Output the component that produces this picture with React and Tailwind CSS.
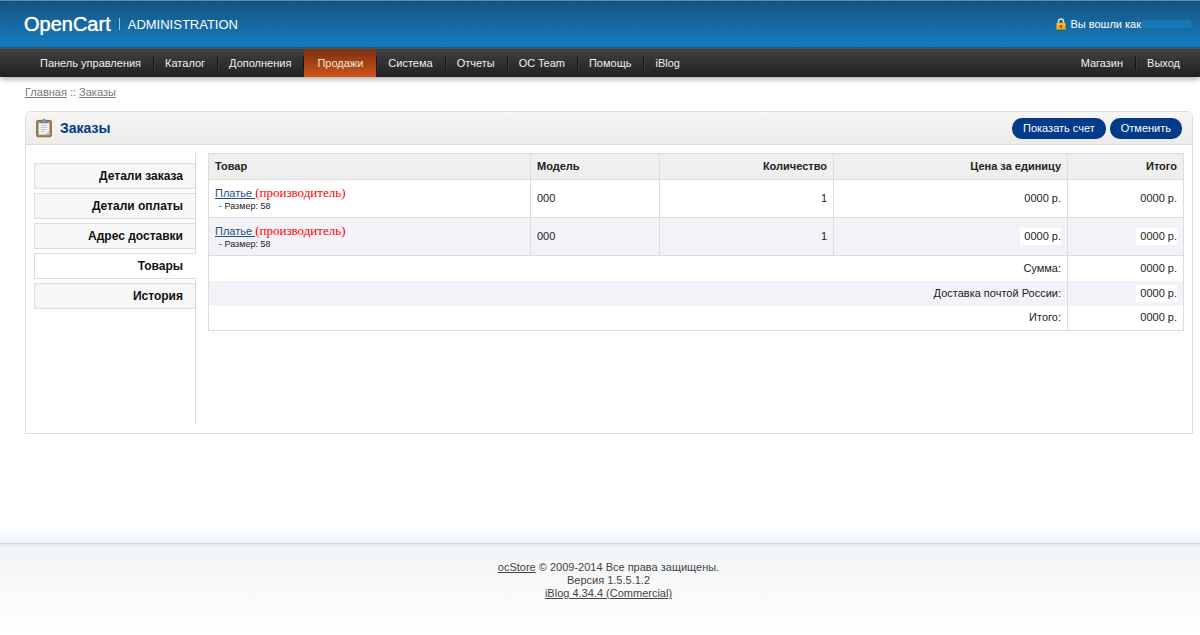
import React, { useState } from 'react';

const menuLeft = [
  'Панель управления',
  'Каталог',
  'Дополнения',
  'Продажи',
  'Система',
  'Отчеты',
  'OC Team',
  'Помощь',
  'iBlog',
];
const menuRight = ['Магазин', 'Выход'];

const tabs = ['Детали заказа', 'Детали оплаты', 'Адрес доставки', 'Товары', 'История'];

const products = [
  { id: 1, name: 'Платье', maker: '(производитель)', option: 'Размер: 58', model: '000', quantity: 1, price: '0000 р.', total: '0000 р.', masked: false },
  { id: 2, name: 'Платье', maker: '(производитель)', option: 'Размер: 58', model: '000', quantity: 1, price: '0000 р.', total: '0000 р.', masked: true },
];

const totals = [
  { id: 1, title: 'Сумма:', text: '0000 р.', masked: false },
  { id: 2, title: 'Доставка почтой России:', text: '0000 р.', masked: true },
  { id: 3, title: 'Итого:', text: '0000 р.', masked: false },
];

const LockIcon = () => (
  <svg className="h-3 w-2.5" viewBox="0 0 10 12" aria-hidden="true">
    <path d="M2.4 6V3.6a2.6 2.6 0 0 1 5.2 0V6" fill="none" stroke="#d9dde0" strokeWidth="1.5" />
    <rect x="0.4" y="5" width="9.2" height="6.6" rx="0.6" fill="#f2ab1e" stroke="#c48318" strokeWidth="0.7" />
    <path d="M1 6h8" stroke="#ffdf80" strokeWidth="0.9" />
    <path d="M5 6.9a1 1 0 0 1 .5 1.8v1.5h-1V8.7a1 1 0 0 1 .5-1.8z" fill="#4a3208" />
  </svg>
);

const OrderIcon = () => (
  <svg className="h-5 w-5" viewBox="0 0 20 20" aria-hidden="true">
    <rect x="2.6" y="2.4" width="14.8" height="16.4" rx="1.4" fill="#a87b3c" stroke="#7c5a2b" strokeWidth="0.8" />
    <path d="M4.6 3.8h10.8v13H4.6z" fill="#f4f5f9" stroke="#b4b0a8" strokeWidth="0.6" />
    <path d="M15.4 12.6l-4.2 4.2h4.2z" fill="#bcc2cf" />
    <path d="M6.6 7.5h6.8M6.6 9.5h6.8M6.6 11.5h6M6.6 13.5h4" stroke="#b3bacb" strokeWidth="0.8" />
    <path d="M5.6 5V3.2H8C8.3 1.7 9 1.2 10 1.2s1.7.5 2 2h2.4V5z" fill="#8f949b" stroke="#63676c" strokeWidth="0.6" />
  </svg>
);

const MenuItem = ({ label, active, divider }) => (
  <li className="flex items-center">
    {divider && <span className="h-3.5 w-px bg-[#161616] shadow-[1px_0_0_#3d3d3d]" />}
    <a
      href="#"
      className={
        active
          ? 'flex h-7 items-center bg-gradient-to-b from-[#7c300f] to-[#cf5519] px-[13px] text-[#f6e6dc]'
          : 'flex h-7 items-center pl-[11px] pr-3 text-[#f0f0f0]'
      }
    >
      {label}
    </a>
  </li>
);

const Header = () => (
  <header className="relative z-10">
    <div className="flex h-12 items-center justify-between border-b border-t border-b-[#2a5f86] border-t-[#5b8cb0] bg-[repeating-linear-gradient(135deg,#ffffff05_0px,#ffffff05_1px,transparent_1px,transparent_3px),linear-gradient(to_bottom,#15527f,#147cc0)] pl-6 pr-2 text-white">
      <div className="flex items-center gap-2">
        <span className="text-xl leading-6 [text-shadow:0_0_1px_#fff]">OpenCart</span>
        <span className="h-3 w-px bg-[#9cc3e0]" />
        <span className="text-[13px]">ADMINISTRATION</span>
      </div>
      <div className="flex items-center">
        <LockIcon />
        <span className="pl-1">Вы вошли как</span>
        <span className="h-2 w-[51px] rounded-sm bg-[#1a77b5]" />
      </div>
    </div>
    <nav className="flex h-[29px] items-center justify-between border-t border-[#4a5560] bg-gradient-to-b from-[#414141] to-[#212121] pl-[29px] pr-2 shadow-[0_2px_6px_rgba(0,0,0,0.35)]">
      <ul className="flex">
        {menuLeft.map((label, i) => (
          <MenuItem key={label} label={label} active={label === 'Продажи'} divider={i > 0} />
        ))}
      </ul>
      <ul className="flex">
        {menuRight.map((label, i) => (
          <MenuItem key={label} label={label} divider={i > 0} />
        ))}
      </ul>
    </nav>
  </header>
);

const Amount = ({ children, masked }) => (
  <span className={masked ? 'inline-block bg-white py-0.5 pl-1' : ''}>{children}</span>
);

const ProductTable = () => (
  <table className="w-full table-fixed border-collapse border border-[#ddd] text-[#222]">
    <colgroup>
      <col />
      <col className="w-[129px]" />
      <col className="w-[174px]" />
      <col className="w-[234px]" />
      <col className="w-[116px]" />
    </colgroup>
    <thead>
      <tr className="h-[26px] bg-[#efefef]">
        <th className="border border-[#ddd] px-1.5 text-left">Товар</th>
        <th className="border border-[#ddd] px-1.5 text-left">Модель</th>
        <th className="border border-[#ddd] px-1.5 text-right">Количество</th>
        <th className="border border-[#ddd] px-1.5 text-right">Цена за единицу</th>
        <th className="border border-[#ddd] px-1.5 text-right">Итого</th>
      </tr>
    </thead>
    <tbody>
      {products.map((product) => (
        <tr key={product.id} className="h-[38px] even:bg-[#f2f2f8]">
          <td className="border border-[#ddd] px-1.5 text-left">
            <div className="leading-[14px]">
              <a href="#" className="text-[#24507a] underline">{product.name} </a>
              <span className="font-['Liberation_Serif',serif] text-[13px] text-[#f00]">{product.maker}</span>
            </div>
            <small className="block pl-1 text-[9px] leading-3">- {product.option}</small>
          </td>
          <td className="border border-[#ddd] px-1.5 text-left">{product.model}</td>
          <td className="border border-[#ddd] px-1.5 text-right">{product.quantity}</td>
          <td className="border border-[#ddd] px-1.5 text-right">
            <Amount masked={product.masked}>{product.price}</Amount>
          </td>
          <td className="border border-[#ddd] px-1.5 text-right">
            <Amount masked={product.masked}>{product.total}</Amount>
          </td>
        </tr>
      ))}
    </tbody>
    <tbody>
      {totals.map((total) => (
        <tr key={total.id} className="h-[25px] even:bg-[#f2f2f8]">
          <td colSpan={4} className="border-r border-[#ddd] px-1.5 text-right">{total.title}</td>
          <td className="px-1.5 text-right">
            <Amount masked={total.masked}>{total.text}</Amount>
          </td>
        </tr>
      ))}
    </tbody>
  </table>
);

const App = () => {
  const [tab, setTab] = useState('Товары');

  return (
    <div className="flex min-h-screen flex-col bg-white font-['Liberation_Sans',Arial,sans-serif] text-[11px] leading-[13px] text-black">
      <Header />

      <main className="flex-1 bg-[linear-gradient(to_top,#eef3f6,#ffffff_16px)] pb-[109px] pl-[25px] pr-[7px]">
        <div className="pb-3 pt-[9px] text-[#777]">
          <a href="#" className="underline">Главная</a> :: <a href="#" className="underline">Заказы</a>
        </div>

        <section className="rounded-t-md border border-[#ddd]">
          <div className="flex h-[33px] items-center justify-between rounded-t-md border-b border-[#ddd] bg-gradient-to-b from-[#f6f6f6] to-[#ebebeb] pl-2 pr-2.5">
            <h1 className="flex items-center gap-1.5 text-sm font-bold text-[#003a88]">
              <OrderIcon />
              Заказы
            </h1>
            <div className="flex gap-1">
              <button type="button" className="h-[21px] rounded-[10px] bg-[#003a88] px-[11px] text-white">Показать счет</button>
              <button type="button" className="h-[21px] rounded-[10px] bg-[#003a88] px-[11px] text-white">Отменить</button>
            </div>
          </div>

          <div className="flex gap-3 p-2 pb-[9px]">
            <div className="flex h-[271px] w-[162px] shrink-0 flex-col gap-1 border-r border-[#ddd] pt-2.5">
              {tabs.map((label) => (
                <button
                  key={label}
                  type="button"
                  onClick={() => setTab(label)}
                  className={
                    tab === label
                      ? '-mr-px h-[26px] border border-r-0 border-[#ddd] bg-white pr-[13px] text-right text-xs font-bold text-[#111]'
                      : 'h-[26px] border border-r-0 border-[#ddd] bg-[#f7f7f7] pr-3 text-right text-xs font-bold text-[#111]'
                  }
                >
                  {label}
                </button>
              ))}
            </div>
            <div className="min-w-0 flex-1">
              <ProductTable />
            </div>
          </div>
        </section>
      </main>

      <footer className="h-[92px] border-t border-[#d3d9dd] bg-[linear-gradient(to_bottom,#e4e8ea,#f2f4f6_4px,#ffffff)] pl-[17px] pt-[17px] text-center text-[#444]">
        <a href="#" className="underline">ocStore</a> © 2009-2014 Все права защищены.
        <br />
        Версия 1.5.5.1.2
        <br />
        <a href="#" className="underline">iBlog 4.34.4 (Commercial)</a>
      </footer>
    </div>
  );
};

export default App;
